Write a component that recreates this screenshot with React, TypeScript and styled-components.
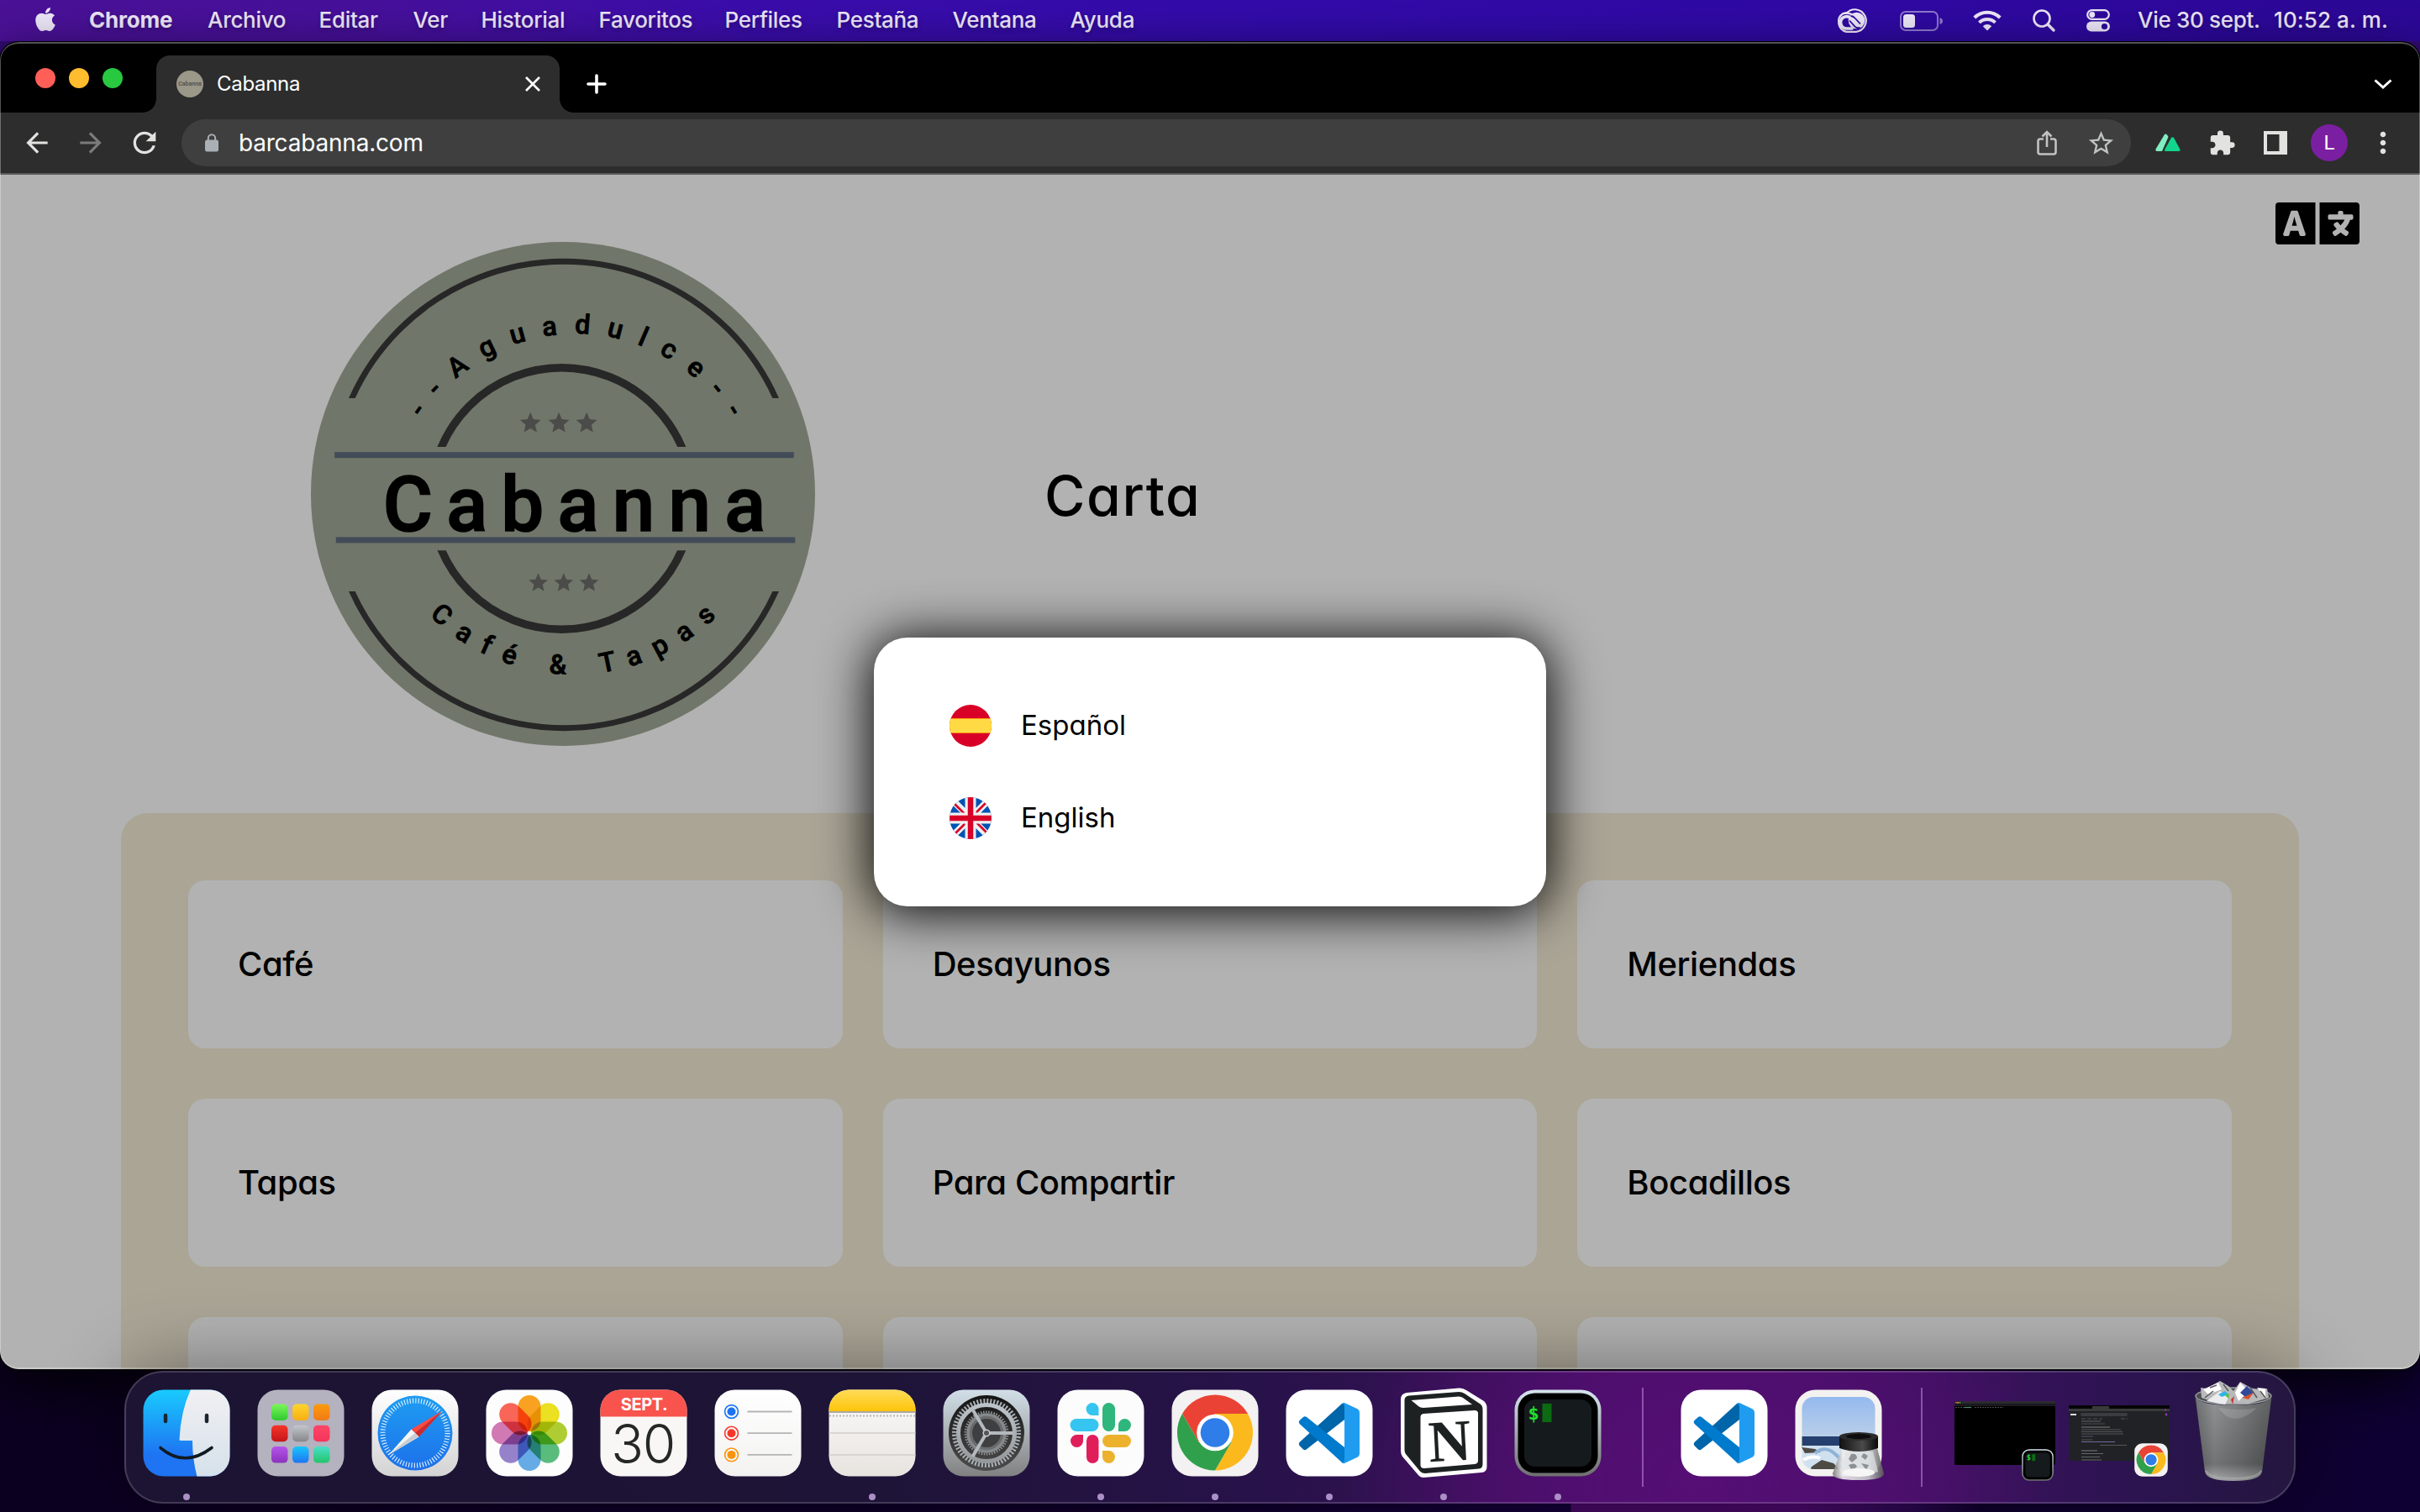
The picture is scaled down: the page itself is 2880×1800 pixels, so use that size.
import React from "react";
import styled, { createGlobalStyle } from "styled-components";
import { FaLanguage, FaApple } from "react-icons/fa";
import {
  MdArrowBack,
  MdArrowForward,
  MdRefresh,
  MdStarBorder,
  MdExtension,
  MdMoreVert,
} from "react-icons/md";

const ui = `Inter, "Liberation Sans", sans-serif`;

const GlobalStyle = createGlobalStyle`
  * { box-sizing: border-box; }
  body { margin: 0; background: #0b001d; overflow: hidden; }
  svg { display: block; flex: none; overflow: visible; }
`;

const Desktop = styled.div`
  width: 2880px;
  height: 1800px;
  overflow: hidden;
  display: flex;
  flex-direction: column;
  font-family: ${ui};
  background:
    linear-gradient(180deg, #3a1070 0, #2c0870 80px, transparent 81px),
    linear-gradient(90deg, #0c0020 0, #10002b 1350px, #14003a 1869px, #480a66 1870px, #48096a 2150px, #2a0850 2280px, #10002e 2360px, #0f0033 100%);
`;

/* ---------- menu bar ---------- */

const MenuBar = styled.header`
  height: 49px;
  flex: none;
  display: flex;
  align-items: center;
  justify-content: space-between;
  color: #ece6f8;
  font-size: 26px;
  background: linear-gradient(90deg, #4a1196 0, #46109b 450px, #3a0dab 900px, #320ba9 1500px, #2f09a3 2200px, #2c0896 100%);
`;

const MenuGroup = styled.nav`
  display: flex;
  align-items: center;
  height: 48px;
  text-shadow: 0 3px 5px rgba(0, 0, 0, 0.25);
`;

const AppleSlot = styled.span`
  width: 106px;
  padding: 0 0 3px 38px;
`;

const MenuItem = styled.span<{ $w: number; $bold?: boolean; $ls?: number }>`
  width: ${(p) => p.$w}px;
  white-space: nowrap;
  font-weight: ${(p) => (p.$bold ? 700 : 500)};
  letter-spacing: ${(p) => p.$ls ?? -0.2}px;
  padding-bottom: 3px;
`;

const StatusSlot = styled.span<{ $w: number }>`
  width: ${(p) => p.$w}px;
  display: flex;
  justify-content: center;
`;

/* ---------- browser window ---------- */

const Window = styled.section`
  position: relative;
  margin-top: 1px;
  width: 2880px;
  height: 1580px;
  flex: none;
  display: flex;
  flex-direction: column;
  border-radius: 22px;
  overflow: hidden;
  background: #000;
  box-shadow: 0 0 0 1px #000, 0 20px 60px rgba(0, 0, 0, 0.8);
  &::after {
    content: "";
    position: absolute;
    inset: 0;
    border: 2px solid rgba(255, 255, 255, 0.32);
    border-left-width: 1px;
    border-right-width: 1px;
    border-radius: 22px;
    pointer-events: none;
  }
`;

const TabStrip = styled.div`
  height: 84px;
  flex: none;
  display: flex;
  align-items: flex-end;
  padding-left: 42px;
  color: #fff;
`;

const Lights = styled.div`
  display: flex;
  gap: 16px;
  width: 144px;
  padding-bottom: 29px;
`;

const Light = styled.span<{ $c: string }>`
  width: 24px;
  height: 24px;
  border-radius: 50%;
  background: ${(p) => p.$c};
`;

const Tab = styled.div`
  position: relative;
  width: 480px;
  height: 68px;
  border-radius: 16px 16px 0 0;
  background: #2d2d2d;
  display: flex;
  align-items: center;
  padding: 0 21px 0 24px;
  font-size: 24px;
  &::before,
  &::after {
    content: "";
    position: absolute;
    bottom: 0;
    width: 16px;
    height: 16px;
  }
  &::before {
    left: -16px;
    background: radial-gradient(circle at 0 0, transparent 15.5px, #2d2d2d 16px);
  }
  &::after {
    right: -16px;
    background: radial-gradient(circle at 100% 0, transparent 15.5px, #2d2d2d 16px);
  }
`;

const Favicon = styled.span`
  width: 32px;
  height: 32px;
  border-radius: 50%;
  background: #9b9789;
  display: flex;
  align-items: center;
  justify-content: center;
  font: 500 7px Roboto, sans-serif;
  color: #4d4b45;
`;

const TabTitle = styled.span`
  flex: 1;
  padding-left: 16px;
  padding-bottom: 1px;
  letter-spacing: -0.3px;
`;

const NewTab = styled.span`
  width: 88px;
  height: 68px;
  display: flex;
  align-items: center;
  justify-content: center;
`;

const TabSearch = styled.span`
  margin-left: auto;
  width: 88px;
  height: 68px;
  display: flex;
  align-items: center;
  justify-content: center;
`;

const Toolbar = styled.div`
  height: 74px;
  flex: none;
  display: flex;
  align-items: center;
  padding: 0 12px;
  background: #2d2d2d;
  border-bottom: 2px solid #5a5a5a;
`;

const ToolSlot = styled.span<{ $c?: string }>`
  width: 64px;
  display: flex;
  align-items: center;
  justify-content: center;
  color: ${(p) => p.$c ?? "#e2e2e0"};
`;

const Omnibox = styled.div`
  flex: 1;
  margin: 0 12px;
  height: 56px;
  border-radius: 28px;
  background: #3f3f3f;
  display: flex;
  align-items: center;
  padding: 0 4px 0 24px;
  color: #fff;
  font-size: 28px;
`;

const Url = styled.span`
  flex: 1;
  padding-left: 44px;
  letter-spacing: -0.2px;
`;

const LockBox = styled.span`
  width: 24px;
  margin-right: -24px;
  display: flex;
  justify-content: center;
  color: #aab0b6;
`;

const Avatar = styled.span`
  width: 44px;
  height: 44px;
  border-radius: 50%;
  background: #7b1fa2;
  color: #fff;
  font: 400 24px Roboto, sans-serif;
  display: flex;
  align-items: center;
  justify-content: center;
`;

/* ---------- web page ---------- */

const Page = styled.main`
  position: relative;
  flex: 1;
  min-height: 0;
  overflow: hidden;
  background: #b2b2b2;
  color: #000;
  font-family: ${ui};
  font-feature-settings: "cv11";
`;

const Hero = styled.div`
  height: 760px;
  display: flex;
  align-items: center;
  padding-left: 370px;
`;

const PageTitle = styled.h1`
  margin: 4px 0 0 273px;
  font-size: 66px;
  font-weight: 450;
  letter-spacing: 1.6px;
`;

const Translate = styled.div`
  position: absolute;
  right: 72px;
  top: 18px;
  svg {
    width: 100px;
    height: 80px;
  }
`;

const Menu = styled.div`
  margin: 0 144px;
  padding: 80px;
  border-radius: 32px;
  background: #aba596;
  display: grid;
  grid-template-columns: repeat(3, 1fr);
  grid-auto-rows: 200px;
  gap: 60px 48px;
`;

const Card = styled.div`
  border-radius: 20px;
  background: #b2b2b2;
  display: flex;
  align-items: center;
  padding: 0 0 2px 59px;
  font-size: 40px;
  font-weight: 450;
  letter-spacing: -0.4px;
`;

const Modal = styled.div`
  position: absolute;
  left: 1040px;
  top: 551px;
  width: 800px;
  height: 320px;
  border-radius: 40px;
  background: #fff;
  box-shadow: 0 4px 60px 4px rgba(0, 0, 0, 0.95);
  display: flex;
  flex-direction: column;
  gap: 60px;
  padding: 80px 90px;
  font-size: 33px;
  font-weight: 400;
`;

const Language = styled.div`
  height: 50px;
  display: flex;
  align-items: center;
  gap: 35px;
  line-height: 46px;
`;

const LanguageName = styled.span`
  padding-bottom: 2px;
`;

/* ---------- dock ---------- */

const Dock = styled.footer`
  position: relative;
  z-index: 1;
  flex: none;
  margin: 2px auto 0;
  width: 2584px;
  height: 158px;
  padding: 0 4px;
  border: 2px solid rgba(255, 255, 255, 0.17);
  border-radius: 46px;
  display: flex;
  background:
    radial-gradient(ellipse 420px 330px at 1870px 130px, rgba(90, 14, 122, 0.85), rgba(90, 14, 122, 0.6) 50%, transparent),
    linear-gradient(90deg, #1c1432 0, #1e1437 900px, #28124a 1350px, #3a1058 1750px, #3c115e 2150px, #2b1450 2400px, #24163f 100%);
  box-shadow: 0 0 90px rgba(0, 0, 0, 0.42);
`;

const DockSlot = styled.div<{ $running?: boolean }>`
  position: relative;
  width: 136px;
  padding: 20px 16px 0;
  &::after {
    content: "";
    display: ${(p) => (p.$running ? "block" : "none")};
    position: absolute;
    left: 64px;
    top: 144px;
    width: 8px;
    height: 8px;
    border-radius: 50%;
    background: #ab8fc6;
  }
`;

const DockSeparator = styled.div<{ $inset?: number }>`
  width: 62px;
  padding-left: ${(p) => p.$inset ?? 0}px;
  display: flex;
  justify-content: center;
  &::before {
    content: "";
    margin-top: 18px;
    width: 2px;
    height: 118px;
    background: rgba(190, 140, 220, 0.55);
  }
`;

/* ---------- drawings ---------- */

const CreativeCloud = () => (
  <svg width="39" height="29" viewBox="0 0 39 29" fill="none" stroke="#ece6f8">
    <path d="M13.500 27.800 A12 12 0 0 1 9.500 6 L14 5.200 A13.300 13.300 0 1 1 25 27.800 Z" strokeWidth="2.200" />
    <path d="M9 6.400 Q17 4 22.500 9" strokeWidth="2" />
    <circle cx="25.500" cy="14.500" r="9.800" fill="#ece6f8" stroke="none" />
    <path d="M20 24 H14 A7.200 7.200 0 1 1 19 12 L27 20.500" strokeWidth="3.600" strokeLinecap="round" />
    <path d="M17 14.500 L23.500 21.600 Q26.500 24.300 29.500 22.500" stroke="#2f09a3" strokeWidth="1.800" />
    <path d="M18.500 9 Q21.500 9 24 12 L30 18.500" stroke="#2f09a3" strokeWidth="1.800" />
  </svg>
);

const Battery = () => (
  <svg width="52" height="24" viewBox="0 0 52 24">
    <rect x="1" y="1" width="44" height="22" rx="6" fill="none" stroke="#ece6f8" strokeOpacity=".5" strokeWidth="2" />
    <path d="M47.5 8 Q51 9 51 12 T47.5 16Z" fill="#ece6f8" fillOpacity=".5" />
    <rect x="4" y="4" width="14" height="16" rx="3.5" fill="#ece6f8" />
  </svg>
);

const Wifi = () => (
  <svg width="34" height="25" viewBox="0 0 34 25" fill="none" stroke="#ece6f8" strokeWidth="4">
    <path d="M1.8 9 A21.5 21.5 0 0 1 32.2 9" />
    <path d="M7.5 14.8 A13.5 13.5 0 0 1 26.5 14.8" />
    <path d="M17 24.5 L11.8 19.2 A7.4 7.4 0 0 1 22.2 19.2Z" fill="#ece6f8" stroke="none" />
  </svg>
);

const Spotlight = () => (
  <svg width="27" height="27" viewBox="0 0 27 27" fill="none" stroke="#ece6f8" strokeLinecap="round">
    <circle cx="11" cy="11" r="9.5" strokeWidth="2.6" />
    <path d="M18 18 L25 25" strokeWidth="3.4" />
  </svg>
);

const ControlCenter = () => (
  <svg width="28" height="27" viewBox="0 0 28 27">
    <rect x="1.2" y="1.2" width="25.6" height="10.6" rx="5.3" fill="none" stroke="#ece6f8" strokeWidth="2.2" />
    <circle cx="6.8" cy="6.5" r="3.4" fill="#ece6f8" />
    <rect x="0" y="14.5" width="28" height="12" rx="6" fill="#ece6f8" />
    <circle cx="21.5" cy="20.5" r="3.6" fill="#2d099b" />
  </svg>
);

const Lock = () => (
  <svg width="18" height="22" viewBox="0 0 18 22">
    <rect x="1" y="7.500" width="16" height="14" rx="2.500" fill="currentColor" />
    <path d="M4.800 9 V5.500 A4.200 4.200 0 0 1 13.200 5.500 V9" fill="none" stroke="currentColor" strokeWidth="2" />
  </svg>
);

const Star = ({ x, y, r }: { x: number; y: number; r: number }) => {
  const points = Array.from({ length: 10 }, (_, i) => {
    const a = (Math.PI / 5) * i - Math.PI / 2;
    const d = i % 2 ? r * 0.46 : r;
    return `${x + d * Math.cos(a)},${y + d * Math.sin(a)}`;
  }).join(" ");
  return <polygon points={points} fill="#4b4c4a" />;
};

const Logo = () => (
  <svg width="600" height="600" viewBox="49 44 1470 1470">
    <defs>
      <clipPath id="outerTop"><rect x="0" y="0" width="1568" height="500" /></clipPath>
      <clipPath id="outerBottom"><rect x="0" y="1063" width="1568" height="500" /></clipPath>
      <clipPath id="innerTop"><rect x="0" y="0" width="1568" height="642" /></clipPath>
      <clipPath id="innerBottom"><rect x="0" y="944" width="1568" height="500" /></clipPath>
      <path id="arcTop" d="M295 839 A527 527 0 0 1 1349 839" />
      <path id="arcBottom" d="M215 705 A600 600 0 0 0 1415 705" />
    </defs>
    <circle cx="784" cy="779" r="735" fill="#707669" />
    <g fill="none" stroke="#272727">
      <circle cx="786.5" cy="779" r="678" strokeWidth="17" clipPath="url(#outerTop)" />
      <circle cx="786.5" cy="784" r="678" strokeWidth="17" clipPath="url(#outerBottom)" />
      <circle cx="780" cy="792" r="381" strokeWidth="23" clipPath="url(#innerTop)" />
      <circle cx="780" cy="793" r="381" strokeWidth="23" clipPath="url(#innerBottom)" />
    </g>
    {[689, 772, 853].map((x) => <Star key={x} x={x} y={573} r={32} />)}
    {[712, 786, 860].map((x) => <Star key={x} x={x} y={1039} r={29} />)}
    <rect x="118" y="657" width="1339" height="17" fill="#424b57" />
    <rect x="122" y="905" width="1339" height="17" fill="#424b57" />
    <g fontFamily="Roboto, sans-serif" fontWeight="500" stroke="#000">
      <text x="259" y="888" fontSize="222" letterSpacing="40" strokeWidth="4">Cabanna</text>
      <text fontSize="79" letterSpacing="48.500" strokeWidth="2">
        <textPath href="#arcTop" startOffset="294">--Aguadulce--</textPath>
      </text>
      <text fontSize="79" letterSpacing="42" strokeWidth="2">
        <textPath href="#arcBottom" startOffset="477">Café &amp; Tapas</textPath>
      </text>
    </g>
  </svg>
);

const SpainFlag = () => (
  <svg width="50" height="50" viewBox="0 0 50 50">
    <clipPath id="es"><circle cx="25" cy="25" r="25" /></clipPath>
    <g clipPath="url(#es)">
      <rect width="50" height="50" fill="#d80027" />
      <rect y="16" width="50" height="18" fill="#ff9811" />
      <rect y="17" width="50" height="16" fill="#ffda44" />
    </g>
  </svg>
);

const BritainFlag = () => (
  <svg width="50" height="50" viewBox="0 0 50 50">
    <clipPath id="gb"><circle cx="25" cy="25" r="25" /></clipPath>
    <g clipPath="url(#gb)">
      <rect width="50" height="50" fill="#0052b4" />
      <path d="M0 0 L50 50 M50 0 L0 50" stroke="#f0f0f0" strokeWidth="8" />
      <path d="M5 7 L22 24 M28 22 L45 5 M5 45 L22 28 M28 26 L45 43" stroke="#d80027" strokeWidth="2.6" />
      <path d="M25 0 V50 M0 25 H50" stroke="#f0f0f0" strokeWidth="13" />
      <path d="M25 0 V50 M0 25 H50" stroke="#d80027" strokeWidth="6.5" />
    </g>
  </svg>
);

const Icon = ({ children, size = 104 }: { children: React.ReactNode; size?: number }) => (
  <svg width={size} height={size} viewBox="0 0 104 104">{children}</svg>
);

const Tile = ({ fill }: { fill: string }) => <rect x=".5" y=".5" width="103" height="103" rx="24" fill={fill} />;

const Finder = () => (
  <Icon>
    <defs>
      <linearGradient id="fb" x2="0" y2="1"><stop stopColor="#19cbfe" /><stop offset=".75" stopColor="#1e74f2" /></linearGradient>
      <linearGradient id="fw" x2="0" y2="1"><stop stopColor="#f1f0f3" /><stop offset="1" stopColor="#d5e1ea" /></linearGradient>
      <clipPath id="fc"><rect x=".5" y=".5" width="103" height="103" rx="24" /></clipPath>
    </defs>
    <g clipPath="url(#fc)">
      <rect width="104" height="104" fill="url(#fb)" />
      <path d="M57 0 Q45 26 43.5 60 Q43.500 61 45 61 H59 Q59 83 64.500 104 H104 V0Z" fill="url(#fw)" />
    </g>
    <path d="M27 31 V38 M76 31 V38" stroke="#1b2530" strokeWidth="4.500" strokeLinecap="round" />
    <path d="M21 69.500 Q50 94 82 69.500" fill="none" stroke="#111a22" strokeWidth="3.600" strokeLinecap="round" />
  </Icon>
);

const padColors = [
  ["#7bf75a", "#2fc92f"], ["#ffd42c", "#f7ae16"], ["#f99c0c", "#f27a17"],
  ["#f53528", "#c4161a"], ["#c2c7cc", "#85868a"], ["#fb4668", "#f53559"],
  ["#b554e8", "#8a32bd"], ["#19c5fb", "#1e75f2"], ["#4adfca", "#23c46a"],
];

const Launchpad = () => (
  <Icon>
    <Tile fill="#b4b2be" />
    {padColors.map(([a, b], i) => (
      <g key={a}>
        <linearGradient id={`lp${i}`} x2="0" y2="1"><stop stopColor={a} /><stop offset="1" stopColor={b} /></linearGradient>
        <rect x={17 + (i % 3) * 25} y={17.500 + Math.floor(i / 3) * 25.300} width="19.500" height="19.500" rx="5" fill={`url(#lp${i})`} />
      </g>
    ))}
  </Icon>
);

const Safari = () => (
  <Icon>
    <defs>
      <linearGradient id="sb" x2="0" y2="1"><stop stopColor="#fff" /><stop offset="1" stopColor="#d3d3d3" /></linearGradient>
      <linearGradient id="sc" x2="0" y2="1"><stop stopColor="#1e9df2" /><stop offset="1" stopColor="#1d70ea" /></linearGradient>
    </defs>
    <Tile fill="url(#sb)" />
    <circle cx="52" cy="52" r="44.500" fill="url(#sc)" />
    <circle cx="52" cy="52" r="38.500" fill="none" stroke="#e8f4ff" strokeWidth="6" strokeDasharray="1.100 2.260" />
    <path d="M84 26 L47.500 47.500 L56.500 56.500Z" fill="#fa4b41" />
    <path d="M84 26 L52 52 L56.500 56.500Z" fill="#c92b30" />
    <path d="M20.500 78 L47.500 47.500 L56.500 56.500Z" fill="#f3f5f7" />
    <path d="M20.500 78 L52 52 L56.500 56.500Z" fill="#c9cdd2" />
  </Icon>
);

const petals = ["#fb9b0e", "#ecdf0e", "#aacb22", "#4cb873", "#5aa6e6", "#8e78c8", "#cf6fae", "#fb5a4b"];

const Blend = styled.g`
  isolation: isolate;
`;

const Petal = styled.rect`
  mix-blend-mode: multiply;
`;

const Photos = () => (
  <Icon>
    <Blend>
      <Tile fill="#fdfdfd" />
      {petals.map((c, i) => (
        <Petal key={c} x="38.500" y="7" width="27" height="43" rx="13.500" fill={c} fillOpacity=".92" transform={`rotate(${i * 45} 52 52)`} />
      ))}
      <circle cx="52" cy="52" r="2.200" fill="#fff" />
    </Blend>
  </Icon>
);

const Calendar = () => (
  <Icon>
    <clipPath id="cal"><rect x=".5" y=".5" width="103" height="103" rx="24" /></clipPath>
    <g clipPath="url(#cal)">
      <rect width="104" height="104" fill="#f8f7f6" />
      <rect width="104" height="32.500" fill="#f8544d" />
    </g>
    <text x="52.500" y="25" textAnchor="middle" fontFamily={ui} fontWeight="700" fontSize="20" letterSpacing="-.4" fill="#fff">SEPT.</text>
    <text x="51" y="87.500" textAnchor="middle" fontFamily={ui} fontWeight="300" fontSize="64" letterSpacing="-1.500" fill="#262828">30</text>
  </Icon>
);

const Reminders = () => (
  <Icon>
    <defs><linearGradient id="rm" x2="0" y2="1"><stop stopColor="#fff" /><stop offset="1" stopColor="#f3f2f1" /></linearGradient></defs>
    <Tile fill="url(#rm)" />
    {["#1a74f3", "#f6382c", "#fb930b"].map((c, i) => (
      <g key={c} transform={`translate(0 ${26.500 + i * 25.700})`}>
        <circle cx="20.500" r="7.900" fill="none" stroke={c} strokeWidth="1.600" />
        <circle cx="20.500" r="5" fill={c} />
        <path d="M39.500 0 H92.500" stroke="#b5b3b6" strokeWidth="1.800" />
      </g>
    ))}
  </Icon>
);

const Notes = () => (
  <Icon>
    <defs>
      <clipPath id="nc"><rect x=".5" y=".5" width="103" height="103" rx="24" /></clipPath>
      <linearGradient id="nb" x2="0" y2="1"><stop stopColor="#fbfbfa" /><stop offset="1" stopColor="#e7e3df" /></linearGradient>
      <linearGradient id="ny" x2="0" y2="1"><stop stopColor="#ffdc59" /><stop offset="1" stopColor="#fdc50a" /></linearGradient>
    </defs>
    <g clipPath="url(#nc)">
      <rect width="104" height="104" fill="url(#nb)" />
      <rect width="104" height="26" fill="url(#ny)" />
      <rect y="26" width="104" height="2" fill="#aba89f" />
      <path d="M1 31.500 H104" stroke="#b7b5b2" strokeWidth="2" strokeDasharray="2 2" />
      <path d="M0 52 H104 M0 78 H104" stroke="#d1cfcc" strokeWidth="1.600" />
    </g>
  </Icon>
);

const Settings = () => (
  <Icon>
    <defs>
      <linearGradient id="st" x2="0" y2="1"><stop stopColor="#d2dfe8" /><stop offset="1" stopColor="#818181" /></linearGradient>
      <linearGradient id="sd" x2="0" y2="1"><stop stopColor="#141414" /><stop offset="1" stopColor="#4c4c4c" /></linearGradient>
      <linearGradient id="sr" x2="0" y2="1"><stop stopColor="#bcc4ca" /><stop offset="1" stopColor="#96999b" /></linearGradient>
    </defs>
    <Tile fill="url(#st)" />
    <circle cx="52" cy="52" r="45" fill="url(#sd)" />
    <circle cx="52" cy="52" r="38" fill="none" stroke="#aab0b4" strokeWidth="6" strokeDasharray="2 1.980" />
    <circle cx="52" cy="52" r="33.500" fill="none" stroke="url(#sr)" strokeWidth="5" />
    <circle cx="52" cy="52" r="25" fill="none" stroke="#8e9294" strokeWidth="3" strokeDasharray="1.500 1.640" />
    <circle cx="52" cy="52" r="22" fill="#6b6c6d" stroke="#85898b" strokeWidth="3.500" />
    <circle cx="52" cy="52" r="17" fill="#3e3f40" />
    <path d="M52 52 H84 M52 52 L35.500 24 M52 52 L35.500 80" stroke="#b3b9bd" strokeWidth="4" />
    <circle cx="52" cy="52" r="3.800" fill="#555" stroke="#c5cbd0" strokeWidth="1.600" />
  </Icon>
);

const Slack = () => (
  <Icon>
    <Tile fill="#fcfcfc" />
    <path d="M49.500 31 H42 A7.500 7.500 0 1 1 49.500 23.500Z" fill="#36c5f0" />
    <rect x="15.500" y="35" width="34" height="15" rx="7.500" fill="#36c5f0" />
    <rect x="54" y="16" width="15" height="34" rx="7.500" fill="#2eb67d" />
    <path d="M73 50 V42.500 A7.500 7.500 0 1 1 80.500 50Z" fill="#2eb67d" />
    <path d="M31 54 V61.500 A7.500 7.500 0 1 1 23.500 54Z" fill="#e01e5a" />
    <rect x="35" y="54" width="14.500" height="34" rx="7.250" fill="#e01e5a" />
    <rect x="54" y="54" width="34" height="15" rx="7.500" fill="#ecb22e" />
    <path d="M54 73 H61.500 A7.500 7.500 0 1 1 54 80.500Z" fill="#ecb22e" />
  </Icon>
);

const Chrome = ({ size }: { size?: number }) => (
  <Icon size={size}>
    <Tile fill="#f3f1f1" />
    <g transform="translate(1 0)">
      <path d="M12 29 A45 45 0 0 1 90 29 L51 29 L31.500 62.700Z" fill="#ea4335" />
      <path d="M90 29 A45 45 0 0 1 51 96.500 L70.500 62.700 L51 29Z" fill="#fcb91d" />
      <path d="M51 96.500 A45 45 0 0 1 12 29 L31.500 62.700 H70.500Z" fill="#30a04c" />
      <circle cx="51" cy="51.500" r="21.800" fill="#fff" />
      <circle cx="51" cy="51.500" r="17.300" fill="#2f7de9" />
    </g>
  </Icon>
);

const VsCode = () => (
  <Icon>
    <Tile fill="#fff" />
    <path d="M16.500 63 Q15 65 16.500 67 L21 71.500 Q23 73 25 71.300 L70 36 V16 L67 17Z" fill="#0065a9" />
    <path d="M16.500 41 Q15 39 16.500 37 L21 33 Q23 31.500 25 33 L70 69 V88 L67 87Z" fill="#007acc" />
    <path d="M70 16 L85.500 23.300 Q88 24.500 88 27.500 V76.500 Q88 79.500 85.500 80.700 L70 88 Q68 88.500 66.500 87 Q70 87.500 70 83 V21 Q70 16.500 66.500 17.500 Q68 15.500 70 16Z" fill="#1f9cf0" />
  </Icon>
);

const Notion = () => (
  <Icon>
    <path d="M1 12 Q1 5 8 4 L70 -1.500 Q75 -2 79 1 L100 14 Q103.500 17 103.500 22 V92 Q103.500 98.500 97 99 L28 105 Q24 105 21 101 L3 80 Q1 77 1 73Z" fill="#fff" />
    <path d="M5.500 13 Q5.500 8 11 7.500 L70 3 Q74 3 77 5 L95 17 Q98.500 19 98.500 24 V89 Q98.500 94 94 94.500 L30 100 Q26 100 23.500 97 L7 77 Q5.500 75 5.500 72Z" fill="#1e2122" />
    <path d="M13.500 13 L70 8.500 Q73 8.500 75 10 L86 18 L28 22 Q24 22 22 20Z" fill="#fff" />
    <path d="M24.500 33 Q24.500 29.500 28 29 L89 25 Q93 25 93 28.500 V85 Q93 88.500 89 89 L29 94 Q24.500 94 24.500 90Z" fill="#fff" />
    <text x="34" y="85" fontFamily="Liberation Serif, serif" fontWeight="700" fontSize="70" fill="#1e2122" transform="rotate(-3 59 60)">N</text>
  </Icon>
);

const ITerm = ({ size }: { size?: number }) => (
  <Icon size={size}>
    <defs><linearGradient id="it" x2="0" y2="1"><stop stopColor="#d6e4ee" /><stop offset="1" stopColor="#6f6f6f" /></linearGradient></defs>
    <Tile fill="url(#it)" />
    <rect x="4.500" y="4.500" width="95" height="95" rx="20" fill="#000" />
    <rect x="12" y="12" width="80" height="80" rx="13" fill="#151a1d" />
    <text x="16.500" y="36" fontFamily="DejaVu Sans Mono, monospace" fontWeight="700" fontSize="22" fill="#1fe02d">$</text>
    <rect x="33.500" y="17" width="11" height="22" fill="#0c6b12" />
  </Icon>
);

const Preview = () => (
  <Icon>
    <defs>
      <linearGradient id="sky" x2="0" y2="1"><stop stopColor="#94b9ef" /><stop offset="1" stopColor="#b9cfe9" /></linearGradient>
      <linearGradient id="glass" x2="1" y2="0"><stop stopColor="#777" /><stop offset=".2" stopColor="#eee" /><stop offset=".7" stopColor="#c9cbcd" /><stop offset="1" stopColor="#555" /></linearGradient>
      <linearGradient id="cap" x2="1" y2="0"><stop stopColor="#111" /><stop offset=".6" stopColor="#4a4a4a" /><stop offset="1" stopColor="#080808" /></linearGradient>
      <clipPath id="pc"><rect x="8.500" y="9" width="87" height="86" rx="14" /></clipPath>
    </defs>
    <Tile fill="#f3f2f0" />
    <g clipPath="url(#pc)">
      <rect x="8" y="8" width="90" height="48" fill="url(#sky)" />
      <rect x="8" y="56" width="90" height="14" fill="#25406e" />
      <rect x="8" y="67" width="90" height="30" fill="#cfe0ef" />
      <path d="M8 69 L24 71 L31 75 L12 76Z M20 92 L32 84 L46 88 L54 96 H18Z" fill="#4e4a44" />
      <path d="M24 76 Q36 66 48 77 T60 86" stroke="#8fb3d8" strokeWidth="4" fill="none" />
      <path d="M10 84 Q20 78 30 82" stroke="#fff" strokeWidth="4" fill="none" />
    </g>
    <path d="M56 70 H98 L106 100 Q106 108 76 108 Q44 108 45 100Z" fill="url(#glass)" fillOpacity=".9" />
    <path d="M61 74 H93 L99 98 Q78 105 54 98Z" fill="#dfe2e5" fillOpacity=".7" />
    <path d="M67 77 Q74 76 74 82 L68 87 L64 83Z M82 76 L87 79 L84 84 L79 80Z M64 90 Q72 86 74 92 L68 97Z M79 88 L88 90 L85 96Z" fill="#8d9196" />
    <ellipse cx="76" cy="99" rx="19" ry="5" fill="#f6f6f6" />
    <path d="M53 56 V70 Q76 78 99 70 V56Z" fill="url(#cap)" />
    <ellipse cx="76" cy="56" rx="23" ry="5" fill="#2b2b2b" />
    <ellipse cx="76" cy="56" rx="15" ry="3" fill="#0c0c0c" />
  </Icon>
);

const Trash = () => (
  <Icon>
    <defs>
      <linearGradient id="tr" x2="1" y2="0"><stop stopColor="#6f7273" /><stop offset=".25" stopColor="#929495" /><stop offset=".6" stopColor="#7c7e7f" /><stop offset="1" stopColor="#5f6162" /></linearGradient>
      <linearGradient id="tv" x2="0" y2="1"><stop stopOpacity="0" /><stop offset=".8" stopOpacity=".22" /><stop offset="1" stopColor="#fff" stopOpacity=".2" /></linearGradient>
    </defs>
    <ellipse cx="52" cy="8" rx="45" ry="10" fill="#4c4e50" stroke="#9a9c9d" strokeWidth="1.500" />
    <path d="M14 10 L13 -2 L20 -1 L36 -10 L46 -4 L52 2 L60 -9 L76 0 L92 -1 L94 10 L70 17 H34Z" fill="#b9b9bb" />
    <path d="M16 0 L34 -8 L38 0 L22 6Z M60 -8 L70 2 L58 14 L54 4Z M80 -2 L90 -1 L90 10Z" fill="#fff" />
    <path d="M20 14 L36 2 L46 10 L42 18Z" fill="#ececee" />
    <path d="M34 6 L42 2 L46 6 L38 9Z" fill="#2fb4e8" /><path d="M42 7 L47 5 L46 11Z" fill="#5fbf2e" />
    <path d="M60 4 L68 -4 L76 4 L66 9Z" fill="#31499b" /><path d="M62 10 L76 4 L70 12Z" fill="#d9502a" /><path d="M49 12 L53 8 L51 18Z" fill="#c8372b" />
    <path d="M18 10 L28 2 M40 -6 L46 2 M72 -2 L80 10 M84 2 L90 10 M24 -2 L32 -5" stroke="#57585a" strokeWidth="1.500" />
    <path d="M6.500 8 Q10 19 52 19 Q94 19 97.500 8 L86 98 Q84 109 52 109 Q20 109 18 98Z" fill="url(#tr)" />
    <path d="M6.500 8 Q10 19 52 19 Q94 19 97.500 8 L86 98 Q84 109 52 109 Q20 109 18 98Z" fill="url(#tv)" />
    <path d="M34 22 Q52 48 80 22 Q60 26 34 22Z" fill="#fff" fillOpacity=".14" />
    <path d="M19 97 Q24 106 52 106 T85 97" fill="none" stroke="#b2b4b5" strokeOpacity=".5" strokeWidth="2" />
  </Icon>
);

const Thumb = styled.div<{ $h: number; $bg: string; $top: number }>`
  position: relative;
  margin: ${(p) => p.$top}px -8px 0;
  width: 120px;
  height: ${(p) => p.$h}px;
  background: ${(p) => p.$bg};
  border-radius: 2px;
  & > svg:last-child {
    position: absolute;
    right: 2px;
    bottom: -19px;
  }
`;

const TerminalThumb = () => (
  <Thumb $h={76} $bg="#000" $top={14}>
    <svg width="120" height="76" viewBox="0 0 120 76">
      <rect width="120" height="3.500" fill="#2b2a31" />
      <rect y="3.500" width="120" height="2.500" fill="#1b1a20" />
      <circle cx="2" cy="1.800" r=".9" fill="#f55" /><circle cx="4.200" cy="1.800" r=".9" fill="#fb2" /><circle cx="6.400" cy="1.800" r=".9" fill="#3c4" />
      <path d="M1 7.500 H12 M24 7.500 H58" stroke="#4a4a4a" strokeWidth="1.200" strokeDasharray="2 1" />
      <path d="M12 7.500 H20" stroke="#4f8f6f" strokeWidth="1.200" />
    </svg>
    <ITerm size={38} />
  </Thumb>
);

const resultLines: [number, number, number, string][] = [
  [15, 19, 23, "#666"], [15, 22, 28, "#4a4a4a"], [15, 26, 34, "#7d7d7d"], [15, 29, 47, "#555"],
  [15, 31.500, 49, "#555"], [15, 34, 50, "#555"], [15, 37, 14, "#556"], [15, 41, 13, "#555"],
  [15, 43.500, 40, "#6d6b9c"], [37, 47.500, 32, "#555"], [15, 54, 19, "#7d7d7d"], [15, 57.500, 26, "#666"],
  [15, 61.500, 22, "#666"], [15, 65, 24, "#666"],
];

const BrowserThumb = () => (
  <Thumb $h={66} $bg="#212225" $top={19}>
    <svg width="120" height="66" viewBox="0 0 120 66">
      <rect width="120" height="4" fill="#060606" />
      <rect x="28" y="1" width="20" height="3" fill="#3a3a3a" />
      <rect y="4" width="120" height="3" fill="#3a3a3c" />
      <rect x="14" y="9" width="56" height="4" rx="2" fill="#3b3c40" />
      <path d="M2 11 H9" stroke="#ddd" strokeWidth="2" />
      <circle cx="116" cy="11" r="1.400" fill="#93c" /><circle cx="115" cy="5.500" r="1" fill="#93c" />
      <path d="M15 16 H40 M62 16 H70" stroke="#555" strokeWidth="1" strokeDasharray="5 2" />
      {resultLines.map(([x, y, w, c]) => (
        <path key={y} d={`M${x} ${y} h${w}`} stroke={c} strokeWidth="1" />
      ))}
    </svg>
    <Chrome size={40} />
  </Thumb>
);

const menus: [string, number][] = [
  ["Archivo", 132.500], ["Editar", 112], ["Ver", 81], ["Historial", 140], ["Favoritos", 150],
  ["Perfiles", 133], ["Pestaña", 138], ["Ventana", 140], ["Ayuda", 90],
];

const dishes = ["Café", "Desayunos", "Meriendas", "Tapas", "Para Compartir", "Bocadillos", "", "", ""];

const apps: [string, React.FC, boolean][] = [
  ["finder", Finder, true], ["launchpad", Launchpad, false], ["safari", Safari, false], ["photos", Photos, false],
  ["calendar", Calendar, false], ["reminders", Reminders, false], ["notes", Notes, true], ["settings", Settings, false],
  ["slack", Slack, true], ["chrome", Chrome, true], ["vscode", VsCode, true], ["notion", Notion, true], ["iterm", ITerm, true],
];

export default function App() {
  return (
    <Desktop>
      <GlobalStyle />
      <MenuBar>
        <MenuGroup>
          <AppleSlot><FaApple size={32} /></AppleSlot>
          <MenuItem $w={141} $bold>Chrome</MenuItem>
          {menus.map(([label, w]) => <MenuItem key={label} $w={w} $ls={-0.3}>{label}</MenuItem>)}
        </MenuGroup>
        <MenuGroup>
          <StatusSlot $w={42}><CreativeCloud /></StatusSlot>
          <StatusSlot $w={126}><Battery /></StatusSlot>
          <StatusSlot $w={30}><Wifi /></StatusSlot>
          <StatusSlot $w={104}><Spotlight /></StatusSlot>
          <StatusSlot $w={26}><ControlCenter /></StatusSlot>
          <StatusSlot $w={34} />
          <MenuItem $w={162} $ls={-0.3}>Vie 30 sept.</MenuItem>
          <MenuItem $w={174} $ls={0.1}>10:52 a. m.</MenuItem>
        </MenuGroup>
      </MenuBar>

      <Window>
        <TabStrip>
          <Lights>
            <Light $c="#ff5f57" /><Light $c="#febc2e" /><Light $c="#28c840" />
          </Lights>
          <Tab>
            <Favicon>Cabanna</Favicon>
            <TabTitle>Cabanna</TabTitle>
            <svg width="22" height="22" viewBox="0 0 22 22" stroke="#fff" strokeWidth="2.600">
              <path d="M3 3 L19 19 M19 3 L3 19" />
            </svg>
          </Tab>
          <NewTab>
            <svg width="24" height="24" viewBox="0 0 24 24" stroke="#fff" strokeWidth="3.600" strokeLinecap="round">
              <path d="M12 2 V22 M2 12 H22" />
            </svg>
          </NewTab>
          <TabSearch>
            <svg width="22" height="12" viewBox="0 0 22 12" fill="none" stroke="#fff" strokeWidth="3">
              <path d="M1.500 1.500 L11 10 L20.500 1.500" />
            </svg>
          </TabSearch>
        </TabStrip>
        <Toolbar>
          <ToolSlot><MdArrowBack size={38} /></ToolSlot>
          <ToolSlot $c="#7b7b7b"><MdArrowForward size={38} /></ToolSlot>
          <ToolSlot><MdRefresh size={40} /></ToolSlot>
          <Omnibox>
            <LockBox><Lock /></LockBox>
            <Url>barcabanna.com</Url>
            <ToolSlot $c="#c0c2c3">
              <svg width="24" height="30" viewBox="0 0 24 30" fill="none" stroke="currentColor" strokeWidth="2.600">
                <path d="M8 10.500 H4 Q1.500 10.500 1.500 13 V26 Q1.500 28.500 4 28.500 H20 Q22.500 28.500 22.500 26 V13 Q22.500 10.500 20 10.500 H16 M12 20 V2.500 M6.500 7.500 L12 2 L17.500 7.500" />
              </svg>
            </ToolSlot>
            <ToolSlot $c="#c0c2c3"><MdStarBorder size={35} /></ToolSlot>
          </Omnibox>
          <ToolSlot>
            <svg width="30" height="22" viewBox="0 0 30 22">
              <path d="M11 1 Q12.500 0 14 1.500 L15.500 4 L8 21 H1.500 Q0 20.500 .5 18.500Z" fill="#80eec0" />
              <path d="M19 5 Q20.500 3.500 22 5 L29.500 19 Q30 21 28 21 H11 L11.500 18.500Z" fill="#12d58d" />
            </svg>
          </ToolSlot>
          <ToolSlot><MdExtension size={33} /></ToolSlot>
          <ToolSlot>
            <svg width="28" height="28" viewBox="0 0 28 28">
              <path d="M0 0 H28 V28 H0Z M4 4 V24 H18.500 V4Z" fill="currentColor" fillRule="evenodd" />
            </svg>
          </ToolSlot>
          <ToolSlot><Avatar>L</Avatar></ToolSlot>
          <ToolSlot><MdMoreVert size={40} /></ToolSlot>
        </Toolbar>

        <Page>
          <Hero>
            <Logo />
            <PageTitle>Carta</PageTitle>
          </Hero>
          <Translate><FaLanguage /></Translate>
          <Menu>
            {dishes.map((d, i) => <Card key={i}>{d}</Card>)}
          </Menu>
          <Modal>
            <Language><SpainFlag /><LanguageName>Español</LanguageName></Language>
            <Language><BritainFlag /><LanguageName>English</LanguageName></Language>
          </Modal>
        </Page>
      </Window>

      <Dock>
        {apps.map(([name, Glyph, running]) => (
          <DockSlot key={name} $running={running}><Glyph /></DockSlot>
        ))}
        <DockSeparator $inset={4} />
        <DockSlot><VsCode /></DockSlot>
        <DockSlot><Preview /></DockSlot>
        <DockSeparator />
        <DockSlot><TerminalThumb /></DockSlot>
        <DockSlot><BrowserThumb /></DockSlot>
        <DockSlot><Trash /></DockSlot>
      </Dock>
    </Desktop>
  );
}
